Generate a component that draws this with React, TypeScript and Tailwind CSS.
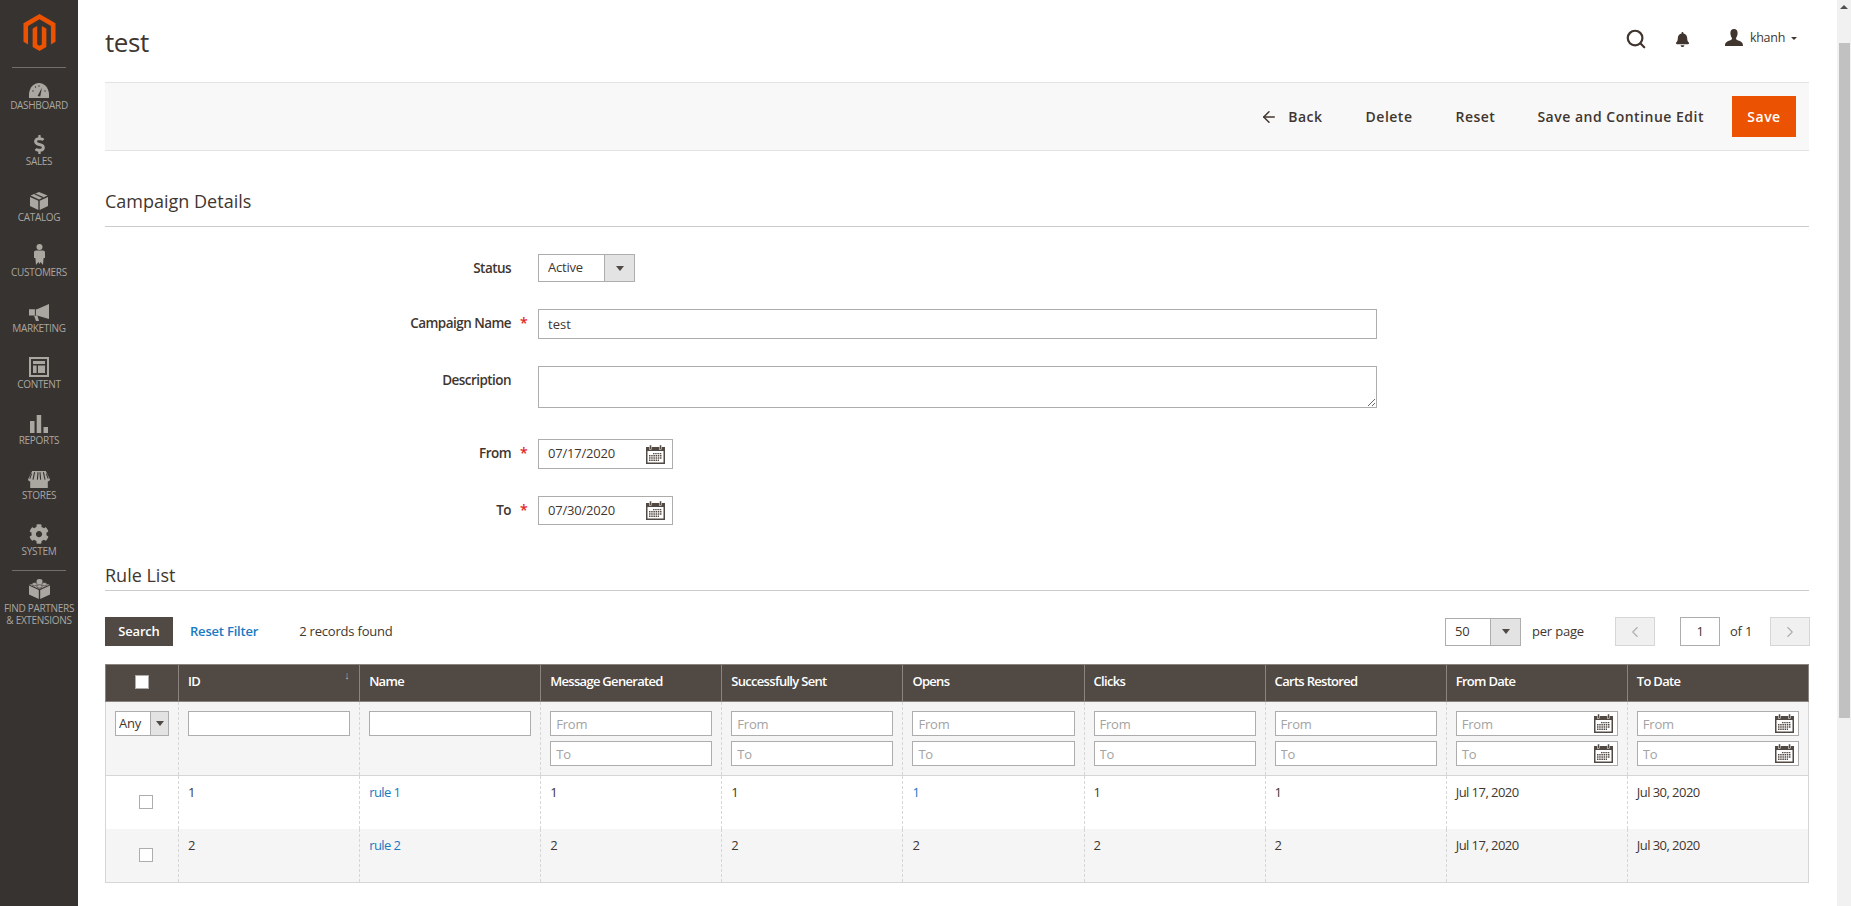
import React from 'react';
import { Search, ArrowLeft, ChevronLeft, ChevronRight } from 'lucide-react';
import { FaBell, FaCog, FaDollarSign } from 'react-icons/fa';
import { SiMagento } from 'react-icons/si';

const navFill = '#aaa6a0';

const GaugeIcon = () => (
  <svg width="20" height="15" viewBox="0 0 20 15">
    <path d="M0 15 C-1 6 4 0 10 0 C16 0 21 6 20 15 Z" fill={navFill} />
    <path d="M8.6 13 L13 4.5 L11.2 13.6 Z" fill="#373330" />
    <circle cx="4" cy="8" r="0.7" fill="#373330" />
    <circle cx="6.5" cy="4" r="0.7" fill="#373330" />
    <circle cx="10" cy="3" r="0.7" fill="#373330" />
    <circle cx="16" cy="8" r="0.7" fill="#373330" />
  </svg>
);

const BoxIcon = () => (
  <svg width="18" height="18" viewBox="0 0 18 18">
    <path d="M9 0 L17.5 3.6 L9 7.4 L0.5 3.6 Z" fill={navFill} />
    <path d="M0 5 L8.3 8.8 V18 L0 14 Z" fill={navFill} />
    <path d="M18 5 L9.7 8.8 V18 L18 14 Z" fill={navFill} />
    <path d="M4.5 1.8 L13 5.6" stroke="#373330" strokeWidth="1.2" />
  </svg>
);

const PersonIcon = () => (
  <svg width="11" height="21" viewBox="0 0 11 21">
    <circle cx="5.5" cy="3" r="3" fill={navFill} />
    <path d="M2 6.6 H9 C10.2 6.6 11 7.4 11 8.6 V14 H9.6 L9 21 L6.6 18 L5.5 20 L4.4 18 L2 21 L1.4 14 H0 V8.6 C0 7.4 .8 6.6 2 6.6 Z" fill={navFill} />
  </svg>
);

const MegaphoneIcon = () => (
  <svg width="20" height="17" viewBox="0 0 20 17">
    <path d="M20 0 V15 L8 11.4 H0 V5.2 H8 Z" fill={navFill} />
    <path d="M5 11.6 H8.4 L10 17 H7 Z" fill={navFill} />
    <path d="M6.4 5 V11.6" stroke="#373330" strokeWidth="1" />
  </svg>
);

const ContentIcon = () => (
  <svg width="20" height="20" viewBox="0 0 20 20" fill={navFill}>
    <path fillRule="evenodd" d="M0 0 H20 V20 H0 Z M2 2 V18 H18 V2 Z" />
    <rect x="4" y="4" width="12" height="3" />
    <rect x="4" y="8.5" width="3.6" height="7.5" />
    <rect x="9" y="8.5" width="7" height="7.5" />
  </svg>
);

const ReportsIcon = () => (
  <svg width="18" height="18" viewBox="0 0 18 18" fill={navFill}>
    <rect x="0" y="6" width="4.5" height="12" />
    <rect x="6.7" y="0" width="4.5" height="18" />
    <rect x="13.5" y="12" width="4.5" height="6" />
  </svg>
);

const StoreIcon = () => (
  <svg width="22" height="17" viewBox="0 0 22 17" fill={navFill}>
    <path fillRule="evenodd" d="M4.2 0 H17.8 L22 8.5 C22 9.6 20.8 10.4 19.8 10.4 V17 H2.2 V10.4 C1.2 10.4 0 9.6 0 8.5 Z" />
    <path d="M6.6 1.2 L5 8.6 M10 1.2 L9.4 8.6 M12 1.2 L12.6 8.6 M15.4 1.2 L17 8.6 M3.6 2.6 L1.8 7.6 M18.4 2.6 L20.2 7.6" stroke="#373330" strokeWidth="1.1" fill="none" />
  </svg>
);

const LegoIcon = () => (
  <svg width="21" height="20" viewBox="0 0 21 20">
    <path d="M0 6.6 L9.8 11 V20 L0 15.4 Z" fill={navFill} />
    <path d="M21 6.6 L11.2 11 V20 L21 15.4 Z" fill={navFill} />
    <path d="M10.5 2.6 L20.5 5.8 L10.5 10 L0.5 5.8 Z" fill={navFill} />
    <ellipse cx="10.5" cy="2" rx="3" ry="2" fill={navFill} />
    <ellipse cx="5.5" cy="5.2" rx="2.6" ry="1.7" fill={navFill} stroke="#373330" strokeWidth="0.6" />
    <ellipse cx="15.5" cy="5.2" rx="2.6" ry="1.7" fill={navFill} stroke="#373330" strokeWidth="0.6" />
    <ellipse cx="10.5" cy="7.4" rx="2.6" ry="1.7" fill={navFill} stroke="#373330" strokeWidth="0.6" />
  </svg>
);

const CalendarIcon = () => (
  <svg width="19" height="19" viewBox="0 0 19 19" className="shrink-0">
    <rect x="0" y="2" width="19" height="17" fill="#514943" />
    <rect x="1.5" y="6" width="16" height="11.5" fill="#fff" />
    <rect x="3.5" y="0" width="2" height="4.4" fill="#514943" stroke="#fff" strokeWidth="0.5" />
    <rect x="13.5" y="0" width="2" height="4.4" fill="#514943" stroke="#fff" strokeWidth="0.5" />
    <path d="M7 8.6 H16 M3 10.8 H16 M3 13 H16 M3 15.2 H13" stroke="#514943" strokeWidth="1.4" strokeDasharray="1.5 .7" />
  </svg>
);

const UserIcon = () => (
  <svg width="18" height="17" viewBox="0 0 18 17" fill="#41362f" className="shrink-0">
    <path d="M9 0 C11.6 0 12.8 2 12.6 4.6 C12.5 6.6 11.6 8.4 11 9.2 C10.8 10.4 12 11 14 11.8 C16.4 12.8 18 13.4 18 17 H0 C0 13.4 1.6 12.8 4 11.8 C6 11 7.2 10.4 7 9.2 C6.4 8.4 5.5 6.6 5.4 4.6 C5.2 2 6.4 0 9 0 Z" />
  </svg>
);

const navItems = [
  { label: 'Dashboard', icon: <GaugeIcon /> },
  { label: 'Sales', icon: <FaDollarSign size={19} color={navFill} /> },
  { label: 'Catalog', icon: <BoxIcon /> },
  { label: 'Customers', icon: <PersonIcon /> },
  { label: 'Marketing', icon: <MegaphoneIcon /> },
  { label: 'Content', icon: <ContentIcon /> },
  { label: 'Reports', icon: <ReportsIcon /> },
  { label: 'Stores', icon: <StoreIcon /> },
  { label: 'System', icon: <FaCog size={20} color={navFill} /> },
];

const Sidebar = () => (
  <aside className="w-[78px] h-full shrink-0 bg-[#373330] flex flex-col items-center">
    <div className="h-[67px] w-full flex justify-center pt-[14px]">
      <SiMagento size={37} color="#eb5202" />
    </div>
    <div className="h-px w-[54px] bg-[#736e6a] shrink-0" />
    {navItems.map((item) => (
      <div key={item.label} className="w-full h-[55.75px] shrink-0 flex flex-col items-center pt-[8px]">
        <div className="h-[22px] flex items-end justify-center">{item.icon}</div>
        <div className="text-[10px] tracking-[-0.3px] leading-[14px] uppercase text-[#aaa6a0]">{item.label}</div>
      </div>
    ))}
    <div className="h-px w-[54px] bg-[#736e6a] shrink-0" />
    <div className="w-full flex flex-col items-center pt-[8px]">
      <LegoIcon />
      <div className="mt-[3px] text-[10px] tracking-[-0.3px] leading-[12px] uppercase text-[#aaa6a0] text-center whitespace-nowrap">
        Find Partners
        <br />& Extensions
      </div>
    </div>
  </aside>
);

const SelectBox = ({
  value,
  className,
  arrowClass,
}: {
  value: string;
  className: string;
  arrowClass: string;
}) => (
  <div className={`flex border border-[#adadad] bg-white text-[13px] tracking-[-0.2px] text-[#41362f] ${className}`}>
    <div className="flex-1 flex items-center overflow-hidden">{value}</div>
    <div className={`flex items-center justify-center bg-[#e3e3e3] border-l border-[#adadad] ${arrowClass}`}>
      <span className="border-x-[4px] border-x-transparent border-t-[5px] border-t-[#514943]" />
    </div>
  </div>
);

const FormRow = ({
  label,
  required,
  children,
}: {
  label: string;
  required?: boolean;
  children: React.ReactNode;
}) => (
  <div className="flex mt-[27px]">
    <div className="w-[406px] text-right text-[13.5px] tracking-[-0.55px] font-semibold text-[#41362f] leading-[28px]">{label}</div>
    <div className="w-[27px] pl-[9px] text-[14px] font-semibold text-[#e22626] leading-[28px]">{required ? '*' : ''}</div>
    {children}
  </div>
);

const DateField = ({ value, className }: { value: string; className: string }) => (
  <div className={`w-[135px] flex items-center border border-[#adadad] bg-white pl-[9px] pr-[7px] justify-between text-[13px] tracking-[-0.2px] text-[#41362f] ${className}`}>
    <span>{value}</span>
    <CalendarIcon />
  </div>
);

const inputClass =
  'block w-full h-[25px] border border-[#adadad] bg-white px-[5px] text-[13px] tracking-[-0.2px] text-[#41362f] placeholder:text-[#a3a3a3] outline-none';

const RangeFilter = ({ calendar }: { calendar?: boolean }) => (
  <div className="flex flex-col gap-[5px]">
    {['From', 'To'].map((p) => (
      <div key={p} className="relative">
        <input className={inputClass} placeholder={p} readOnly />
        {calendar && (
          <div className="absolute right-[5px] top-[3px]">
            <CalendarIcon />
          </div>
        )}
      </div>
    ))}
  </div>
);

const columns = ['Message Generated', 'Successfully Sent', 'Opens', 'Clicks', 'Carts Restored', 'From Date', 'To Date'];

const rows = [
  { id: 1, name: 'rule 1', from: 'Jul 17, 2020', to: 'Jul 30, 2020', stripe: false },
  { id: 2, name: 'rule 2', from: 'Jul 17, 2020', to: 'Jul 30, 2020', stripe: true },
];

const thClass = 'border-l border-[#8a837f] pl-[9px] pr-[10px] pb-[2px] text-left text-[13px] tracking-[-0.7px] font-semibold text-white align-middle';
const tdClass = 'border-l border-dashed border-[#d6d6d6] pl-[9px] pr-[9px] pt-[7px] align-top text-[13px] tracking-[-0.55px] text-[#41362f]';

const RuleGrid = () => (
  <table className="w-[1704px] table-fixed border-collapse">
    <colgroup>
      <col className="w-[73px]" />
      <col className="w-[181px]" />
      <col className="w-[181px]" />
      {columns.map((c) => (
        <col key={c} className="w-[181px]" />
      ))}
    </colgroup>
    <thead>
      <tr className="h-[37px] bg-[#514943] border border-[#8a837f]">
        <th className="border-l border-[#8a837f] align-middle">
          <div className="w-[14px] h-[14px] bg-white border border-[#adadad] mx-auto -translate-y-[1px]" />
        </th>
        <th className={thClass}>
          <div className="relative">
            ID
            <span className="absolute right-[0px] -top-[5px] text-[11px] text-[#b5b0ac] font-normal">↓</span>
          </div>
        </th>
        <th className={thClass}>Name</th>
        {columns.map((c) => (
          <th key={c} className={thClass}>
            {c}
          </th>
        ))}
      </tr>
    </thead>
    <tbody>
      <tr className="h-[74px] bg-[#f5f5f5] border border-[#d6d6d6]">
        <td className="border-l border-[#d6d6d6] px-[9px] pt-[9px] align-top">
          <SelectBox value="Any" className="h-[25px] pl-[3px]" arrowClass="w-[18px]" />
        </td>
        <td className={tdClass + ' pt-[9px]'}>
          <input className={inputClass} readOnly />
        </td>
        <td className={tdClass + ' pt-[9px]'}>
          <input className={inputClass} readOnly />
        </td>
        {columns.map((c, i) => (
          <td key={c} className={tdClass + ' pt-[9px]'}>
            <RangeFilter calendar={i >= 5} />
          </td>
        ))}
      </tr>
      {rows.map((r) => (
        <tr key={r.id} className={`h-[53.5px] border-x border-[#d6d6d6] ${r.stripe ? 'bg-[#f5f5f5] border-b' : 'bg-white'}`}>
          <td className="align-top pt-[19px]">
            <div className="w-[14px] h-[14px] bg-white border border-[#adadad] mx-auto translate-x-[4px]" />
          </td>
          <td className={tdClass}>{r.id}</td>
          <td className={tdClass}>
            <span className="text-[#1979c3]">{r.name}</span>
          </td>
          <td className={tdClass}>{r.id}</td>
          <td className={tdClass}>{r.id}</td>
          <td className={tdClass}>
            {r.id === 1 ? <span className="text-[#1979c3]">{r.id}</span> : r.id}
          </td>
          <td className={tdClass}>{r.id}</td>
          <td className={tdClass}>{r.id}</td>
          <td className={tdClass}>{r.from}</td>
          <td className={tdClass}>{r.to}</td>
        </tr>
      ))}
    </tbody>
  </table>
);

const toolbarBtn = 'text-[14px] font-semibold tracking-[0.5px] text-[#41362f]';

const App = () => {
  return (
    <div className="w-[1851px] h-[906px] flex overflow-hidden bg-white font-['Open_Sans',sans-serif]">
      <Sidebar />
      <main className="w-[1759px] shrink-0 pl-[27px] pr-[28px]">
        {/* page header */}
        <div className="h-[82px] flex justify-between pt-[22px]">
          <h1 className="text-[26px] tracking-[-0.4px] leading-[40px] text-[#41362f]">test</h1>
          <div className="flex items-start pt-[7px] text-[#41362f] pr-[12px]">
            <Search size={22} strokeWidth={2.4} className="text-[#41362f] -mt-[1px] mr-[28px]" />
            <FaBell size={15} className="mt-[3px] mr-[35px]" />
            <UserIcon />
            <span className="ml-[7px] text-[12.5px] tracking-[-0.3px] leading-[18px]">khanh</span>
            <span className="mt-[8px] ml-[6px] border-x-[3px] border-x-transparent border-t-[3px] border-t-[#41362f]" />
          </div>
        </div>

        {/* actions */}
        <div className="h-[69px] bg-[#f8f8f8] border-y border-[#e3e3e3] flex items-center justify-end pr-[13px]">
          <ArrowLeft size={18} strokeWidth={2} className="text-[#41362f] mr-[10px]" />
          <span className={toolbarBtn}>Back</span>
          <span className={toolbarBtn + ' ml-[43px]'}>Delete</span>
          <span className={toolbarBtn + ' ml-[43px]'}>Reset</span>
          <span className={toolbarBtn + ' ml-[42px]'}>Save and Continue Edit</span>
          <span className="ml-[28px] h-[41px] w-[64px] bg-[#eb5202] flex items-center justify-center text-[14px] font-semibold tracking-[0.5px] text-white">
            Save
          </span>
        </div>

        <h2 className="mt-[38px] text-[18px] leading-[25px] text-[#41362f]">Campaign Details</h2>
        <div className="mt-[12px] h-px bg-[#cccccc]" />

        <FormRow label="Status">
          <SelectBox value="Active" className="w-[97px] h-[28px] pl-[9px]" arrowClass="w-[30px]" />
        </FormRow>
        <FormRow label="Campaign Name" required>
          <input
            className="w-[839px] h-[30px] border border-[#adadad] px-[9px] text-[13px] text-[#41362f] outline-none"
            defaultValue="test"
            readOnly
          />
        </FormRow>
        <FormRow label="Description">
          <textarea className="w-[839px] h-[42px] border border-[#adadad] outline-none" readOnly />
        </FormRow>
        <div className="h-[4px]" />
        <FormRow label="From" required>
          <DateField value="07/17/2020" className="h-[30px]" />
        </FormRow>
        <FormRow label="To" required>
          <DateField value="07/30/2020" className="h-[29px]" />
        </FormRow>

        <h2 className="mt-[38px] text-[18px] leading-[25px] text-[#41362f]">Rule List</h2>
        <div className="mt-[2px] h-px bg-[#cccccc]" />

        {/* grid toolbar */}
        <div className="mt-[26px] h-[29px] flex items-center text-[13px] tracking-[-0.2px] text-[#41362f]">
          <span className="w-[68px] h-[29px] bg-[#514943] text-white font-semibold flex items-center justify-center">Search</span>
          <span className="ml-[17px] font-semibold text-[#1979c3]">Reset Filter</span>
          <span className="ml-[41px]">2 records found</span>
          <div className="flex-1" />
          <SelectBox value="50" className="w-[76px] h-[28px] pl-[9px]" arrowClass="w-[30px]" />
          <span className="ml-[11px] w-[83px]">per page</span>
          <span className="w-[40px] h-[29px] bg-[#f0f0f0] border border-[#d6d6d6] flex items-center justify-center">
            <ChevronLeft size={18} strokeWidth={1.5} className="text-[#adadad]" />
          </span>
          <span className="ml-[25px] w-[40px] h-[29px] border border-[#adadad] flex items-center justify-center">1</span>
          <span className="ml-[10px] w-[40px]">of 1</span>
          <span className="-mr-[1px] w-[40px] h-[29px] bg-[#f0f0f0] border border-[#d6d6d6] flex items-center justify-center">
            <ChevronRight size={18} strokeWidth={1.5} className="text-[#adadad]" />
          </span>
        </div>

        <div className="mt-[18px]">
          <RuleGrid />
        </div>
      </main>

      {/* scrollbar */}
      <div className="w-[14px] shrink-0 h-full bg-[#f1f1f1] flex flex-col items-center">
        <div className="h-[43px] w-full flex justify-center pt-[5px]">
          <span className="h-0 border-x-[4px] border-x-transparent border-b-[4px] border-b-[#505050]" />
        </div>
        <div className="h-[675px] w-[11px] bg-[#c1c1c1]" />
      </div>
    </div>
  );
};

export default App;
